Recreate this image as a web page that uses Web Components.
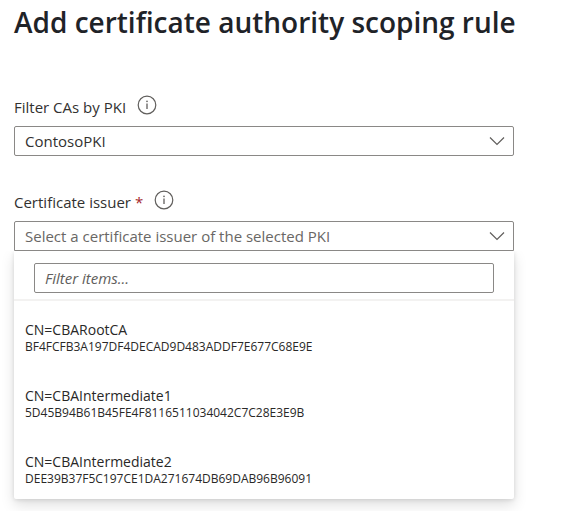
<!DOCTYPE html>
<html lang="en">
<head>
<meta charset="utf-8">
<meta name="viewport" content="width=device-width, initial-scale=1">
<title>Add certificate authority scoping rule</title>
<style>
body{
  margin: 0;
  background: #fff;
  color: #323130;
  font-family: "Open Sans", "Segoe UI", sans-serif;
  font-size: 15px;
  line-height: 20px;
}
</style>
</head>
<body>
<scoping-rule heading="Add certificate authority scoping rule">
  <select-field label="Filter CAs by PKI" value="ContosoPKI"></select-field>
  <select-field label="Certificate issuer" placeholder="Select a certificate issuer of the selected PKI" required>
    <issuer-list>
      <issuer-item name="CN=CBARootCA" key-id="BF4FCFB3A197DF4DECAD9D483ADDF7E677C68E9E"></issuer-item>
      <issuer-item name="CN=CBAIntermediate1" key-id="5D45B94B61B45FE4F8116511034042C7C28E3E9B"></issuer-item>
      <issuer-item name="CN=CBAIntermediate2" key-id="DEE39B37F5C197CE1DA271674DB69DAB96B96091"></issuer-item>
    </issuer-list>
  </select-field>
</scoping-rule>

<script>
function make_template(html){
    let tmpl = document.createElement('template')
    tmpl.innerHTML = html
    return tmpl
}

const rule_tmpl = make_template(/*html*/`
<style>
:host{
  display: block;
  padding: 2px 14px 12px;
}
h1{
  margin: 0;
  color: #1f2328;
  font-size: 28px;
  font-weight: 600;
  line-height: 40px;
  white-space: nowrap;
}
form{
  display: flex;
  flex-direction: column;
  gap: 32px;
  max-width: 500px;
  margin-top: 51px;
}
</style>
<h1></h1>
<form><slot></slot></form>
`)
class scoping_rule extends HTMLElement {
    constructor() {
        super();
        this.attachShadow({mode: 'open'}).appendChild(rule_tmpl.content.cloneNode(true));
    }
    connectedCallback() {
        this.shadowRoot.querySelector("h1").textContent = this.getAttribute("heading")
    }
}
customElements.define('scoping-rule', scoping_rule)

// Round "i" button next to a label
const info_tmpl = make_template(/*html*/`
<style>
:host{
  display: block;
}
button{
  display: block;
  padding: 0;
  border: 0;
  background: none;
  color: #605e5c;
}
svg{
  display: block;
}
</style>
<button type="button" aria-label="More information">
  <svg width="20" height="20" viewBox="0 0 20 20" fill="none" stroke="currentColor">
    <circle cx="10" cy="10" r="8.8" stroke-width="1.2"/>
    <path d="M10 8.5V14" stroke-width="1.3"/>
    <circle cx="10" cy="6.4" r=".8" fill="currentColor" stroke="none"/>
  </svg>
</button>
`)
class info_tip extends HTMLElement {
    constructor() {
        super();
        this.attachShadow({mode: 'open'}).appendChild(info_tmpl.content.cloneNode(true));
    }
}
customElements.define('info-tip', info_tip)

const select_tmpl = make_template(/*html*/`
<style>
:host{
  display: block;
}
.head{
  display: flex;
  gap: 11px;
  height: 31px;
  padding-top: 2px;
}
label{
  padding-top: 2px;
}
.star{
  color: #a4262c;
}
.box{
  display: grid;
  align-items: center;
}
select, svg{
  grid-area: 1 / 1;
}
select{
  appearance: none;
  width: 100%;
  height: 30px;
  margin: 0;
  padding: 0 36px 0 10px;
  border: 1px solid #8a8886;
  border-radius: 2px;
  background: #fff;
  color: inherit;
  font: inherit;
}
:host([placeholder]) select{
  border-bottom-left-radius: 0;
  border-bottom-right-radius: 0;
  color: #696765;
}
svg{
  justify-self: end;
  margin-right: 9px;
  pointer-events: none;
}
</style>
<div class="head">
  <label for="choice"><span id="text"></span><span class="star" hidden> *</span></label>
  <info-tip></info-tip>
</div>
<div class="box">
  <select id="choice"></select>
  <svg width="16" height="10" viewBox="0 0 16 10" fill="none" stroke="#605e5c" stroke-width="1.2">
    <path d="M1 1.5L8 8.5L15 1.5"/>
  </svg>
</div>
<slot></slot>
`)
class select_field extends HTMLElement {
    constructor() {
        super();
        this.attachShadow({mode: 'open'}).appendChild(select_tmpl.content.cloneNode(true));
    }
    connectedCallback() {
        let select = this.shadowRoot.getElementById("choice")
        this.shadowRoot.getElementById("text").textContent = this.getAttribute("label")
        this.shadowRoot.querySelector(".star").hidden = !this.hasAttribute("required")
        select.required = this.hasAttribute("required")
        let option = document.createElement("option")
        option.textContent = this.getAttribute("value") || this.getAttribute("placeholder")
        option.value = this.getAttribute("value") || ""
        select.replaceChildren(option)
    }
}
customElements.define('select-field', select_field)

const list_tmpl = make_template(/*html*/`
<style>
:host{
  display: block;
  border-radius: 0 0 2px 2px;
  background: #fff;
  box-shadow: 0 6px 14px rgba(0,0,0,.13), 0 1px 4px rgba(0,0,0,.11);
  clip-path: inset(0 -24px -24px -24px);
}
.filter{
  padding: 12px 20px 6px;
  border-bottom: 2px solid #f3f2f1;
}
input{
  display: block;
  box-sizing: border-box;
  width: 100%;
  height: 30px;
  padding: 0 10px;
  border: 1px solid #8a8886;
  border-radius: 2px;
  font: inherit;
  color: inherit;
}
input::placeholder{
  color: #605e5c;
  font-style: italic;
  opacity: 1;
}
</style>
<div class="filter"><input type="text" placeholder="Filter items..." aria-label="Filter items"></div>
<div role="group" aria-label="Certificate issuers"><slot></slot></div>
`)
class issuer_list extends HTMLElement {
    constructor() {
        super();
        this.attachShadow({mode: 'open'}).appendChild(list_tmpl.content.cloneNode(true));
        let input = this.shadowRoot.querySelector("input")
        input.addEventListener("input",()=>{
            let wanted = input.value.toLowerCase()
            for(let item of this.querySelectorAll("issuer-item"))
                item.hidden = !item.getAttribute("name").toLowerCase().includes(wanted)
        })
    }
}
customElements.define('issuer-list', issuer_list)

const item_tmpl = make_template(/*html*/`
<style>
:host{
  display: block;
}
:host([hidden]){
  display: none;
}
button{
  display: block;
  width: 100%;
  padding: 20px 11px 12px;
  border: 0;
  background: none;
  color: #292827;
  font: inherit;
  font-size: 14px;
  line-height: 18px;
  text-align: left;
}
button:hover{
  background: #f3f2f1;
}
span{
  display: block;
}
#key{
  font-size: 12px;
  line-height: 16px;
}
</style>
<button type="button"><span id="name"></span><span id="key"></span></button>
`)
class issuer_item extends HTMLElement {
    constructor() {
        super();
        this.attachShadow({mode: 'open'}).appendChild(item_tmpl.content.cloneNode(true));
    }
    connectedCallback() {
        this.shadowRoot.getElementById("name").textContent = this.getAttribute("name")
        this.shadowRoot.getElementById("key").textContent = this.getAttribute("key-id")
    }
}
customElements.define('issuer-item', issuer_item)
</script>
</body>
</html>
